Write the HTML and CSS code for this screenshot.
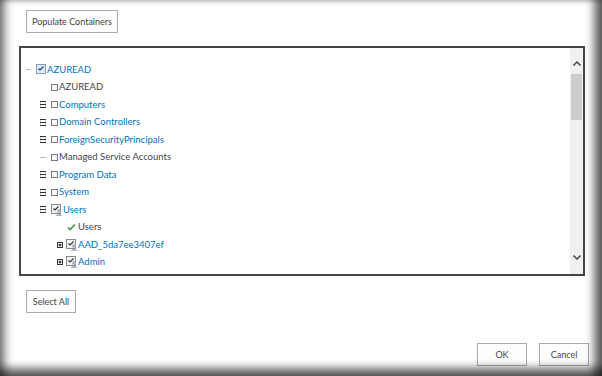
FILE: index.html
```html
<!DOCTYPE html>
<html>
<head>
	<title>Populate Containers</title>
	<link rel="stylesheet" href="styles.css">
</head>
<body>
<div class="dialog">

	<button class="btn btn-populate">Populate Containers</button>

	<div class="tree">
		<div class="tree-list">

			<div class="row lvl0">
				<span class="exp"><svg width="5" height="3"><line x1="0" y1="1.5" x2="5" y2="1.5" stroke="#bbb"/></svg></span>
				<span class="ico ico-root"><svg width="11" height="11"><rect x="0.5" y="0.5" width="9" height="9" fill="#e3ecf8" stroke="#7d9dcb"/><path d="M2.5 4.5 L4 6 L7.5 2.5" fill="none" stroke="#1d3c6c" stroke-width="1.2"/></svg></span>
				<span class="lbl link">AZUREAD</span>
			</div>

			<div class="row lvl1">
				<span class="exp"></span>
				<span class="ico"><span class="box"></span></span>
				<span class="lbl">AZUREAD</span>
			</div>

			<div class="row lvl1">
				<span class="exp"><svg width="6" height="7"><path d="M0.5 0 V7 M5.5 0 V7" stroke="#ccc"/><path d="M0 0.5 H6 M0 3.5 H6 M0 6.5 H6" stroke="#333"/></svg></span>
				<span class="ico"><span class="box"></span></span>
				<span class="lbl link">Computers</span>
			</div>

			<div class="row lvl1">
				<span class="exp"><svg width="6" height="7"><path d="M0.5 0 V7 M5.5 0 V7" stroke="#ccc"/><path d="M0 0.5 H6 M0 3.5 H6 M0 6.5 H6" stroke="#333"/></svg></span>
				<span class="ico"><span class="box"></span></span>
				<span class="lbl link">Domain Controllers</span>
			</div>

			<div class="row lvl1">
				<span class="exp"><svg width="6" height="7"><path d="M0.5 0 V7 M5.5 0 V7" stroke="#ccc"/><path d="M0 0.5 H6 M0 3.5 H6 M0 6.5 H6" stroke="#333"/></svg></span>
				<span class="ico"><span class="box"></span></span>
				<span class="lbl link">ForeignSecurityPrincipals</span>
			</div>

			<div class="row lvl1">
				<span class="exp"><svg width="6" height="3"><line x1="0" y1="1.5" x2="6" y2="1.5" stroke="#bbb"/></svg></span>
				<span class="ico"><span class="box"></span></span>
				<span class="lbl">Managed Service Accounts</span>
			</div>

			<div class="row lvl1">
				<span class="exp"><svg width="6" height="7"><path d="M0.5 0 V7 M5.5 0 V7" stroke="#ccc"/><path d="M0 0.5 H6 M0 3.5 H6 M0 6.5 H6" stroke="#333"/></svg></span>
				<span class="ico"><span class="box"></span></span>
				<span class="lbl link">Program Data</span>
			</div>

			<div class="row lvl1">
				<span class="exp"><svg width="6" height="7"><path d="M0.5 0 V7 M5.5 0 V7" stroke="#ccc"/><path d="M0 0.5 H6 M0 3.5 H6 M0 6.5 H6" stroke="#333"/></svg></span>
				<span class="ico"><span class="box"></span></span>
				<span class="lbl link">System</span>
			</div>

			<div class="row lvl1">
				<span class="exp"><svg width="6" height="7"><path d="M0.5 0 V7 M5.5 0 V7" stroke="#ccc"/><path d="M0 0.5 H6 M0 3.5 H6 M0 6.5 H6" stroke="#333"/></svg></span>
				<span class="ico ico-wide"><svg width="12" height="12"><rect x="0.5" y="0.5" width="9" height="9" fill="#f4f4f4" stroke="#8a8a8a"/><path d="M2.5 4.5 L4 6 L7.5 2.5" fill="none" stroke="#333" stroke-width="1.2"/><circle cx="8" cy="7" r="2" fill="#a9b4c4"/><path d="M4.5 12 Q8 7.5 11.5 12 Z" fill="#a9b4c4"/></svg></span>
				<span class="lbl link">Users</span>
			</div>

			<div class="row lvl2">
				<span class="exp"></span>
				<span class="ico ico-wide"><svg width="11" height="9"><path d="M2 4.5 L4 6.5 L9 1.5" fill="none" stroke="#3f9b3a" stroke-width="1.6"/></svg></span>
				<span class="lbl">Users</span>
			</div>

			<div class="row lvl2">
				<span class="exp"><svg width="6" height="6"><rect x="0.5" y="0.5" width="5" height="5" fill="#fff" stroke="#333"/><path d="M1.5 3 H4.5 M3 1.5 V4.5" stroke="#111"/></svg></span>
				<span class="ico ico-wide"><svg width="12" height="12"><rect x="0.5" y="0.5" width="9" height="9" fill="#f4f4f4" stroke="#8a8a8a"/><path d="M2.5 4.5 L4 6 L7.5 2.5" fill="none" stroke="#333" stroke-width="1.2"/><circle cx="8" cy="7" r="2" fill="#a9b4c4"/><path d="M4.5 12 Q8 7.5 11.5 12 Z" fill="#a9b4c4"/></svg></span>
				<span class="lbl link">AAD_5da7ee3407ef</span>
			</div>

			<div class="row lvl2">
				<span class="exp"><svg width="6" height="6"><rect x="0.5" y="0.5" width="5" height="5" fill="#fff" stroke="#333"/><path d="M1.5 3 H4.5 M3 1.5 V4.5" stroke="#111"/></svg></span>
				<span class="ico ico-wide"><svg width="12" height="12"><rect x="0.5" y="0.5" width="9" height="9" fill="#f4f4f4" stroke="#8a8a8a"/><path d="M2.5 4.5 L4 6 L7.5 2.5" fill="none" stroke="#333" stroke-width="1.2"/><circle cx="8" cy="7" r="2" fill="#a9b4c4"/><path d="M4.5 12 Q8 7.5 11.5 12 Z" fill="#a9b4c4"/></svg></span>
				<span class="lbl link">Admin</span>
			</div>

			<!-- next node, only its icon top shows above the frame edge -->
			<div class="row lvl2">
				<span class="exp"></span>
				<span class="ico ico-wide"><svg width="12" height="12"><rect x="0.5" y="0.5" width="9" height="9" fill="#dfe6f0" stroke="#8a98b0"/></svg></span>
			</div>

		</div>

		<div class="scroll">
			<svg width="8" height="5"><path d="M0.5 4.5 L4 1 L7.5 4.5" fill="none" stroke="#555" stroke-width="1.6"/></svg>
			<div class="thumb"></div>
			<div class="spacer"></div>
			<svg width="8" height="5"><path d="M0.5 0.5 L4 4 L7.5 0.5" fill="none" stroke="#555" stroke-width="1.6"/></svg>
		</div>
	</div>

	<button class="btn btn-select">Select All</button>

	<div class="footer">
		<button class="btn btn-ok">OK</button>
		<button class="btn btn-cancel">Cancel</button>
	</div>

</div>
</body>
</html>
```

FILE: styles.css
```css
body {
	margin: 0;
	background: #fff;
	font-family: Lato, "Liberation Sans", sans-serif;
	font-size: 9.5px;
	color: #444;
}

.dialog {
	position: relative;
	width: 602px;
	height: 376px;
	box-sizing: border-box;
	padding-top: 10px;
	overflow: hidden;
}

/* window edge shadow laid over the content */
.dialog::after {
	content: "";
	position: absolute;
	top: 0;
	left: 0;
	right: 0;
	bottom: 0;
	pointer-events: none;
	box-shadow:
		inset 10px 0 8px -5px rgba(0, 0, 0, 0.5),
		inset -12px 0 8px -4px rgba(0, 0, 0, 0.6),
		inset 0 -12px 8px -4px rgba(0, 0, 0, 0.6),
		inset 0 4px 4px -2px rgba(0, 0, 0, 0.12);
}

.btn {
	display: block;
	box-sizing: border-box;
	height: 23px;
	padding: 0;
	background: #fdfdfd;
	border: 1px solid #ababab;
	font-family: Lato, "Liberation Sans", sans-serif;
	font-size: 9px;
	color: #444;
	text-align: center;
}

.btn-populate {
	margin-left: 26px;
	width: 92px;
}

.tree {
	display: flex;
	box-sizing: border-box;
	width: 566px;
	height: 230px;
	margin: 13px 0 0 19px;
	border: 2px solid #444;
}

.tree-list {
	flex: 1;
	overflow: hidden;
	padding-top: 13px;
}

.row {
	display: flex;
	align-items: center;
	height: 17.5px;
	white-space: nowrap;
}

.lvl0 { padding-left: 5px; }
.lvl1 { padding-left: 19px; }
.lvl2 { padding-left: 36px; }

.exp {
	display: flex;
	align-items: center;
	flex: none;
}

.lvl0 .exp { width: 10px; }
.lvl1 .exp { width: 11px; }
.lvl2 .exp { width: 9px; }

.ico {
	display: flex;
	align-items: center;
	flex: none;
	width: 8px;
}

.ico-root { width: 11px; }
.ico-wide { width: 12px; }

.box {
	display: block;
	box-sizing: border-box;
	width: 7px;
	height: 7px;
	border: 1px solid #7a7a7a;
	background: #fafafa;
}

.lbl {
	color: #444;
	line-height: 12px;
}

.link {
	color: #0072c6;
}

.scroll {
	display: flex;
	flex-direction: column;
	align-items: center;
	width: 13px;
	box-sizing: border-box;
	padding: 13px 0 14px;
	background: #f0f0f0;
}

.thumb {
	width: 11px;
	height: 46px;
	margin-top: 8px;
	background: #cdcdcd;
}

.spacer {
	flex: 1;
}

.btn-select {
	margin: 14px 0 0 26px;
	width: 50px;
}

.footer {
	display: flex;
	justify-content: flex-end;
	gap: 12px;
	margin-top: 30px;
	padding-right: 13px;
}

.btn-ok,
.btn-cancel {
	width: 50px;
}
```
